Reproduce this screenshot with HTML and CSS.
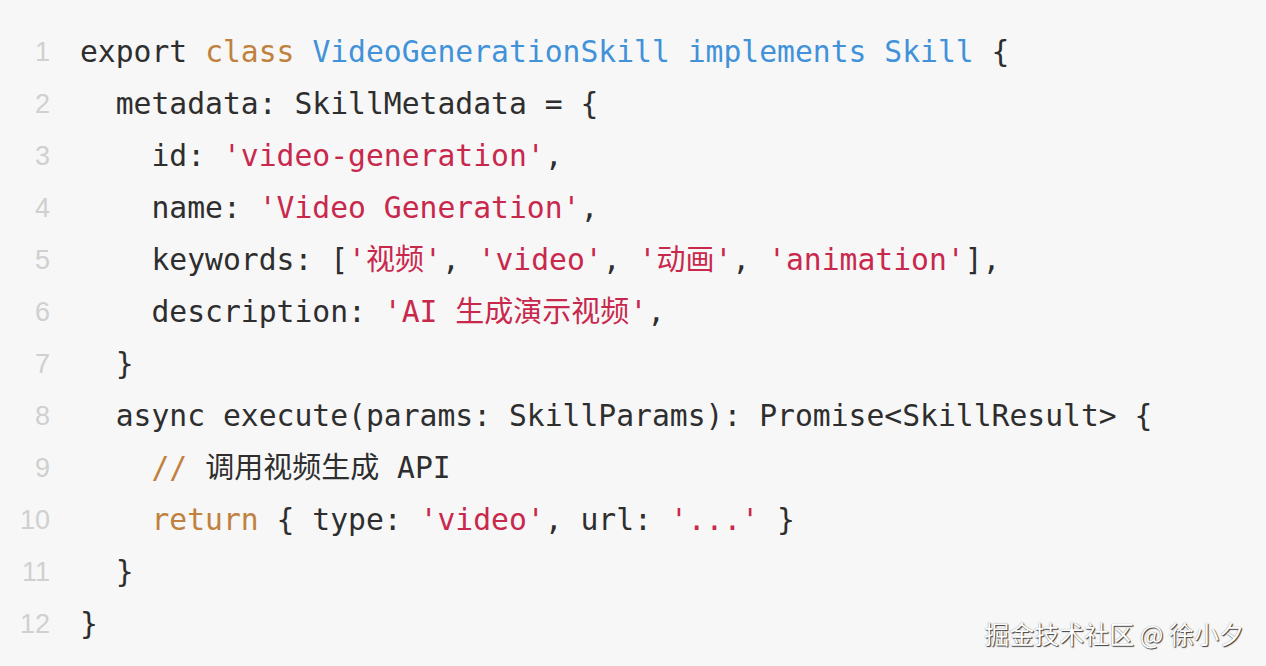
FILE: index.html
```html
<!DOCTYPE html>
<html lang="zh">
<head>
<meta charset="utf-8">
<title>VideoGenerationSkill</title>
<link rel="stylesheet" href="styles.css">
</head>
<body>
<div class="code-block">
  <div class="gutter">
    <span>1</span><span>2</span><span>3</span><span>4</span><span>5</span><span>6</span><span>7</span><span>8</span><span>9</span><span>10</span><span>11</span><span>12</span>
  </div>
  <div class="code">
    <div class="line">export <span class="kw">class</span> <span class="ty">VideoGenerationSkill</span> <span class="ty">implements</span> <span class="ty">Skill</span> {</div>
    <div class="line">  metadata: SkillMetadata = {</div>
    <div class="line">    id: <span class="str">'video-generation'</span>,</div>
    <div class="line">    name: <span class="str">'Video Generation'</span>,</div>
    <div class="line">    keywords: [<span class="str">'<span class="cjk">视频</span>'</span>, <span class="str">'video'</span>, <span class="str">'<span class="cjk">动画</span>'</span>, <span class="str">'animation'</span>],</div>
    <div class="line">    description: <span class="str">'AI <span class="cjk">生成演示视频</span>'</span>,</div>
    <div class="line">  }</div>
    <div class="line">  async execute(params: SkillParams): Promise&lt;SkillResult&gt; {</div>
    <div class="line">    <span class="kw">//</span> <span class="cjk">调用视频生成</span> API</div>
    <div class="line">    <span class="kw">return</span> { type: <span class="str">'video'</span>, url: <span class="str">'...'</span> }</div>
    <div class="line">  }</div>
    <div class="line">}</div>
  </div>
  <div class="watermark">掘金技术社区 @ 徐小夕</div>
</div>
</body>
</html>
```
FILE: styles.css
```css
html, body {
  margin: 0;
  padding: 0;
  background: #f7f7f7;
}
.code-block {
  position: relative;
  width: 1266px;
  height: 666px;
  box-sizing: border-box;
  padding-top: 26px;
  display: flex;
  align-items: flex-start;
  background: #f7f7f7;
  overflow: hidden;
}
.gutter {
  display: flex;
  flex-direction: column;
  width: 50px;
  padding-right: 30px;
  text-align: right;
  font-family: "Liberation Sans", Arial, sans-serif;
  font-size: 27px;
  color: #d0d0d0;
}
.gutter span {
  display: flex;
  align-items: center;
  justify-content: flex-end;
  height: 52px;
  line-height: 52px;
}
.code {
  display: flex;
  flex-direction: column;
  font-family: "DejaVu Sans Mono", "Noto Sans CJK SC", monospace;
  font-size: 29.7px;
  color: #2e2e2e;
}
.line {
  height: 52px;
  line-height: 52px;
  white-space: pre;
  overflow: visible;
}
.kw { color: #c0813f; }
.ty { color: #4192d9; }
.str { color: #c9284d; }
.cjk {
  font-family: "Noto Sans CJK SC", sans-serif;
  font-size: 29px;
  line-height: 1;
}
.watermark {
  position: absolute;
  right: 22px;
  bottom: 18px;
  font-family: "Noto Sans CJK SC", sans-serif;
  font-size: 25px;
  line-height: 30px;
  color: #ffffff;
  text-shadow: 1px 1px 1px rgba(0,0,0,0.75), 0 0 1px rgba(0,0,0,0.5);
}
```
